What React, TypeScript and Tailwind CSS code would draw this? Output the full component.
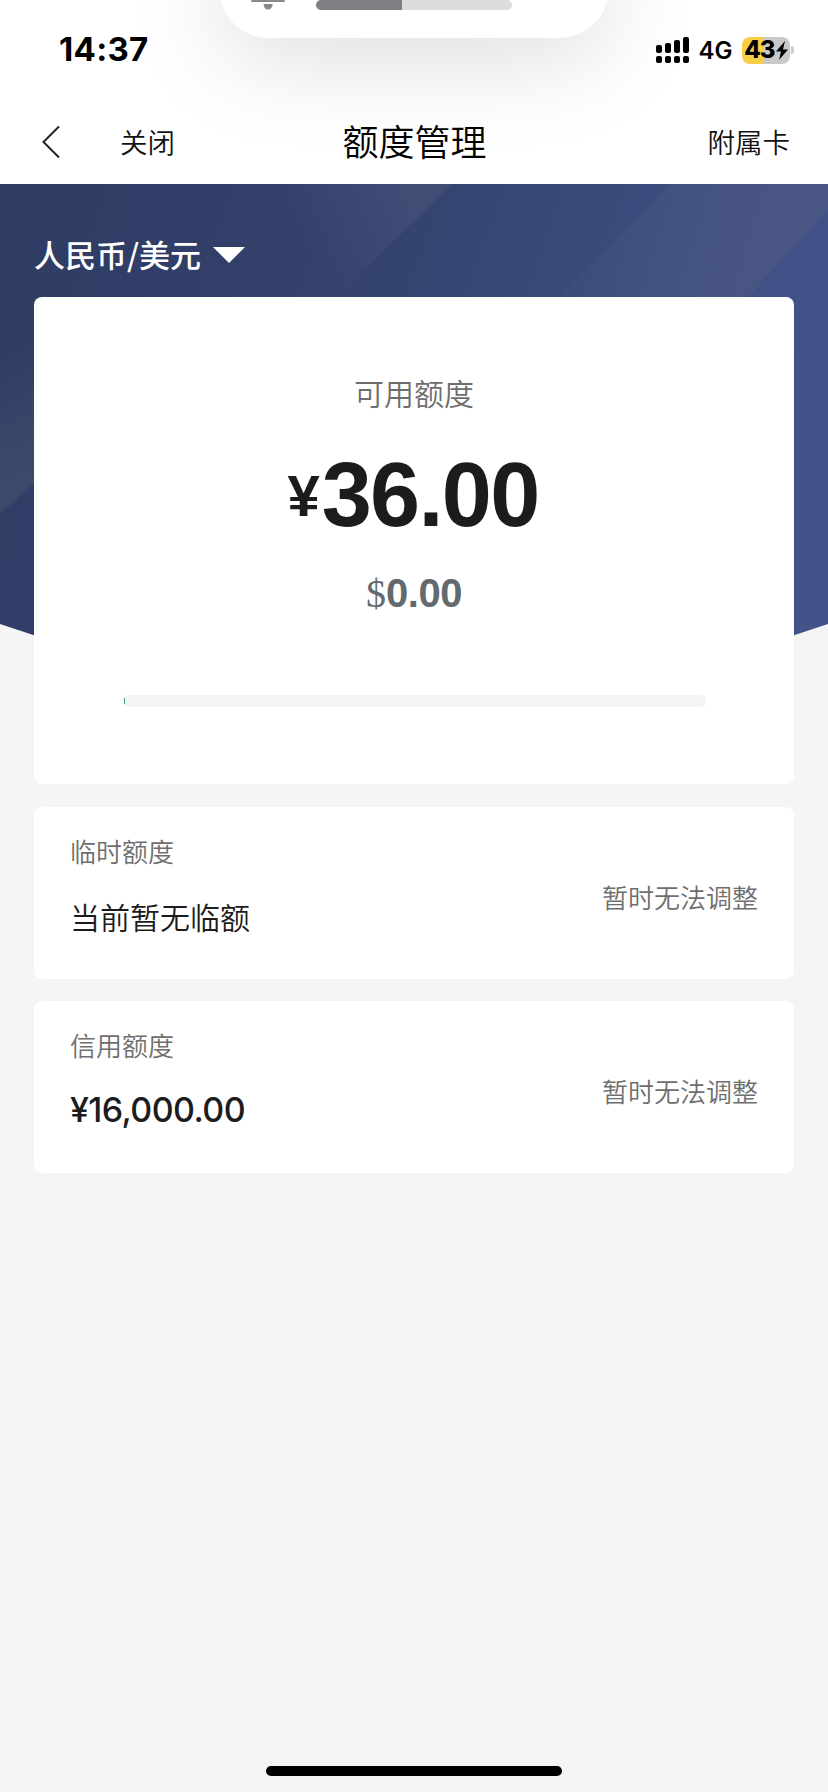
type LimitRow = {
  label: string;
  value: string;
  numeric?: boolean;
  action: string;
};

const limits: LimitRow[] = [
  { label: "临时额度", value: "当前暂无临额", action: "暂时无法调整" },
  { label: "信用额度", value: "¥16,000.00", numeric: true, action: "暂时无法调整" },
];

function VolumeHud() {
  return (
    <div className="absolute left-[219px] -top-[62px] w-[390px] h-[100px] rounded-[50px] bg-white shadow-[0_16px_100px_rgba(0,0,0,0.15)]">
      <svg className="absolute left-[30px] bottom-[28px]" width="38" height="38" viewBox="0 0 38 38" fill="#8a8a8e">
        <path d="M19 2c-6 0-10 5-10 11v8c0 4-7 5-7 9h34c0-4-7-5-7-9v-8c0-6-4-11-10-11Z" />
        <path d="M14.6 32h9c0 3.500-2 5.500-4.500 5.500s-4.500-2-4.500-5.500Z" />
      </svg>
      <div className="absolute left-[97px] bottom-7 w-[196px] h-[10px] rounded-full bg-[#dcdcdc] overflow-hidden">
        <div className="w-[86px] h-full bg-[#7f7e83]" />
      </div>
    </div>
  );
}

function StatusBar() {
  return (
    <div className="flex items-center justify-between h-[100px] pl-[59px] pr-[34px] font-['Inter',sans-serif] text-black">
      <span className="pb-px text-[33px] leading-none font-bold tracking-[0.300px]">14:37</span>
      <div className="flex items-center">
        <svg width="33" height="26" viewBox="0 0 33 26">
          <rect x="0" y="8" width="6" height="8" rx="2" />
          <rect x="9" y="6" width="6" height="10" rx="2" />
          <rect x="18" y="3" width="6" height="13" rx="2" />
          <rect x="27" y="0" width="6" height="16" rx="2" />
          <rect x="0" y="19" width="6" height="7" rx="2" />
          <rect x="9" y="19" width="6" height="7" rx="2" />
          <rect x="18" y="19" width="6" height="7" rx="2" />
          <rect x="27" y="19" width="6" height="7" rx="2" />
        </svg>
        <span className="w-[53px] pt-0.5 text-center text-[24px] leading-none font-semibold">4G</span>
        <div className="flex items-center justify-center w-12 h-[27px] rounded-lg bg-linear-to-r from-[#f7ce46] from-44% to-[#c9c9c9] to-44%">
          <span className="text-[24px] leading-none font-extrabold tracking-[-1px]">43</span>
          <svg className="ml-px" width="12" height="19" viewBox="0 0 12 19">
            <path d="M9 0 0 10.500h5L3 19l9-10.500H7Z" />
          </svg>
        </div>
        <div className="w-[3px] h-2 ml-px rounded-r-full bg-[#c9c9c9]" />
      </div>
    </div>
  );
}

function NavBar() {
  return (
    <header className="grid grid-cols-3 items-center h-[84px] pl-[39px] pr-[38px]">
      <div className="flex items-center">
        <svg width="24" height="34" viewBox="0 0 24 34" fill="none" stroke="#222" strokeWidth="2">
          <path d="M20 1.500 4.500 17 20 32.500" />
        </svg>
        <button className="ml-[57px] text-[27.500px] font-[350] text-[#111]">关闭</button>
      </div>
      <h1 className="pb-[4px] text-center text-[36px] leading-none font-[350] text-black">额度管理</h1>
      <button className="justify-self-end text-[27.500px] font-[350] text-[#111]">附属卡</button>
    </header>
  );
}

function HeroBackdrop() {
  return (
    <svg className="absolute inset-x-0 top-0" width="828" height="480" viewBox="0 0 828 480">
      <defs>
        <linearGradient id="base" x1="0" y1="0" x2="1" y2="0.200">
          <stop offset="0" stopColor="#2e3b62" />
          <stop offset="0.500" stopColor="#35436f" />
          <stop offset="1" stopColor="#43538a" />
        </linearGradient>
        <linearGradient id="left" gradientUnits="userSpaceOnUse" x1="0" y1="170" x2="40" y2="280">
          <stop offset="0" stopColor="#3b4a6b" stopOpacity="0" />
          <stop offset="1" stopColor="#3b4a6b" />
        </linearGradient>
        <linearGradient id="mid" gradientUnits="userSpaceOnUse" x1="310" y1="70" x2="420" y2="10">
          <stop offset="0" stopColor="#414e76" stopOpacity="0" />
          <stop offset="1" stopColor="#414e76" />
        </linearGradient>
        <linearGradient id="right" gradientUnits="userSpaceOnUse" x1="600" y1="50" x2="760" y2="90">
          <stop offset="0" stopColor="#495683" stopOpacity="0.200" />
          <stop offset="1" stopColor="#495683" />
        </linearGradient>
        <clipPath id="hero">
          <path d="M0 0H828V440Q414 583 0 440Z" />
        </clipPath>
      </defs>
      <g clipPath="url(#hero)">
        <rect width="828" height="480" fill="url(#base)" />
        <path d="M0 130V330L40 294V130Z" fill="url(#left)" />
        <path d="M230 0H451L338 113H230Z" fill="url(#mid)" />
        <path d="M670 0H828V25L748 113H560Z" fill="url(#right)" />
      </g>
    </svg>
  );
}

function AvailableCard() {
  return (
    <section className="flex flex-col items-center h-[487px] rounded-lg bg-white">
      <h2 className="mt-[74px] text-[30px] leading-[42px] font-[350] text-[#6e6e6e]">可用额度</h2>
      <p className="flex items-baseline mt-[37px] h-[90px] leading-[90px] text-[#1c1c1c] font-['Liberation_Sans',sans-serif] font-bold">
        <span className="relative -top-[10px] -left-[2px] text-[58px]">¥</span>
        <span className="text-[90px] tracking-[-1.700px]">36.00</span>
      </p>
      <p className="flex items-baseline mt-[28px] h-[50px] leading-[50px] text-[#636a6f]">
        <span className="text-[40px] font-['Liberation_Serif',serif]">$</span>
        <span className="text-[40px] font-bold font-['Liberation_Sans',sans-serif] tracking-[-0.500px]">0.00</span>
      </p>
      <div className="flex items-center w-[583px] h-3 mt-[77px] rounded-[5px] bg-[#f4f4f4]">
        <div className="w-px h-[6px] ml-px bg-[#4aa57c]" />
      </div>
    </section>
  );
}

function LimitCard({ row }: { row: LimitRow }) {
  return (
    <section className="flex justify-between h-[172px] px-9 rounded-lg bg-white">
      <div className="flex flex-col pt-[26px]">
        <span className="text-[26px] leading-[36px] font-[350] text-[#6e6e6e]">{row.label}</span>
        {row.numeric ? (
          <span className="mt-[26px] text-[34px] leading-[42px] font-medium tracking-[-0.600px] text-[#1c1c1c] font-['Inter',sans-serif]">{row.value}</span>
        ) : (
          <span className="mt-[26px] text-[30px] leading-[42px] font-[350] text-[#1c1c1c]">{row.value}</span>
        )}
      </div>
      <span className="pt-[72px] text-[26px] leading-[36px] font-[350] text-[#6e6e6e]">{row.action}</span>
    </section>
  );
}

export default function App() {
  return (
    <div className="relative flex flex-col w-[828px] h-[1792px] overflow-hidden bg-[#f5f5f5] font-['Noto_Sans_CJK_SC',sans-serif]">
      <div className="relative h-[184px] bg-white overflow-hidden">
        <VolumeHud />
        <div className="relative">
          <StatusBar />
          <NavBar />
        </div>
      </div>

      <main className="relative flex-1">
        <HeroBackdrop />
        <div className="relative px-[34px]">
          <button className="flex items-center h-[113px] pt-[29px] text-white">
            <span className="pb-0.5 text-[31px] font-medium">人民币/美元</span>
            <svg className="ml-3" width="32" height="16" viewBox="0 0 32 16" fill="currentColor">
              <path d="M0 0h32L16 16Z" />
            </svg>
          </button>
          <AvailableCard />
          <div className="flex flex-col gap-[22px] mt-[23px]">
            {limits.map((row) => (
              <LimitCard key={row.label} row={row} />
            ))}
          </div>
        </div>
      </main>

      <div className="self-center w-[296px] h-[10px] mb-4 rounded-full bg-black" />
    </div>
  );
}
